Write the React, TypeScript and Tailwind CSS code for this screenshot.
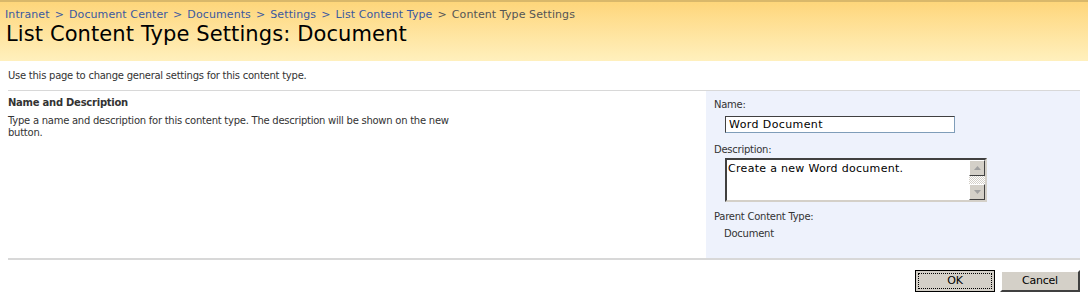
import React from "react";

const font = { fontFamily: '"DejaVu Sans", Verdana, sans-serif' };

export default function App() {
  return (
    <div className="w-[1088px] h-[298px] bg-white overflow-hidden text-[10px] tracking-[-0.25px] text-[#333]" style={font}>
      <div className="h-[61px] border-t-2 border-[#d9b86a] bg-gradient-to-b from-[#fed67a] to-[#fff0bd] pl-[5px] pt-[6px]">
        <div className="flex gap-[5px] text-[11px] text-[#3b59a0] leading-[14px] tracking-[0.1px]">
          <span>Intranet</span><span>&gt;</span>
          <span>Document Center</span><span>&gt;</span>
          <span>Documents</span><span>&gt;</span>
          <span>Settings</span><span>&gt;</span>
          <span>List Content Type</span><span className="text-[#555]">&gt;</span>
          <span className="text-[#555]">Content Type Settings</span>
        </div>
        <div className="text-[21px] leading-[26px] text-black pl-[1px] -mt-[1px] tracking-[0.1px]">List Content Type Settings: Document</div>
      </div>
      <div className="px-[8px]">
        <div className="h-[29px] pt-[8px] leading-[14px]">Use this page to change general settings for this content type.</div>
        <div className="flex border-t border-[#d8d8d8] w-[1072px]">
          <div className="w-[698px] pt-[5px]">
            <div className="font-bold text-[#333] leading-[14px]">Name and Description</div>
            <div className="mt-[5px] leading-[12px] w-[460px]">Type a name and description for this content type. The description will be shown on the new button.</div>
          </div>
          <div className="flex-1 bg-[#eef2fc] h-[167px] pl-[8px] pt-[7px]">
            <div className="leading-[14px]">Name:</div>
            <input
              defaultValue="Word Document"
              className="mt-[4px] ml-[11px] w-[230px] h-[17px] bg-white border border-[#7f9db9] border-t-[#404040] border-l-[#404040] px-[3px] text-[11px] tracking-[0.4px] text-black outline-none"
              style={font}
            />
            <div className="mt-[10px] leading-[14px]">Description:</div>
            <div className="mt-[1px] ml-[11px] w-[262px] h-[44px] bg-white border-2 border-t-[#404040] border-l-[#404040] border-b-[#d4d0c8] border-r-[#d4d0c8] flex">
              <div className="flex-1 text-[11px] tracking-[0.3px] text-black px-[1px] pt-[2px] leading-[14px]">Create a new Word document.</div>
              <div className="w-[16px] flex flex-col bg-[repeating-conic-gradient(#d4d0c8_0%_25%,#ffffff_0%_50%)] bg-[length:2px_2px]">
                <div className="h-[16px] bg-[#d4d0c8] border border-t-white border-l-white border-r-[#404040] border-b-[#404040] flex items-center justify-center">
                  <svg width="7" height="4" viewBox="0 0 7 4"><path d="M3.5 0 L7 4 L0 4 Z" fill="#a0a0a0" /></svg>
                </div>
                <div className="flex-1" />
                <div className="h-[16px] bg-[#d4d0c8] border border-t-white border-l-white border-r-[#404040] border-b-[#404040] flex items-center justify-center">
                  <svg width="7" height="4" viewBox="0 0 7 4"><path d="M0 0 L7 0 L3.5 4 Z" fill="#a0a0a0" /></svg>
                </div>
              </div>
            </div>
            <div className="mt-[8px] leading-[14px]">Parent Content Type:</div>
            <div className="mt-[3px] ml-[10px] leading-[14px]">Document</div>
          </div>
        </div>
        <div className="w-[1072px] h-[2px] bg-[#d8d8d8]" />
        <div className="w-[1072px] flex justify-end gap-[5px] mt-[10px]">
          <button className="w-[80px] h-[22px] bg-[#d4d0c8] border border-[#000] text-black text-[11px] flex items-center justify-center" style={font}>
            <span className="w-[74px] h-[16px] border border-dotted border-black flex items-center justify-center">OK</span>
          </button>
          <button className="w-[80px] h-[22px] bg-[#d4d0c8] border-2 border-t-white border-l-white border-r-[#404040] border-b-[#404040] text-black text-[11px]" style={font}>Cancel</button>
        </div>
      </div>
    </div>
  );
}
